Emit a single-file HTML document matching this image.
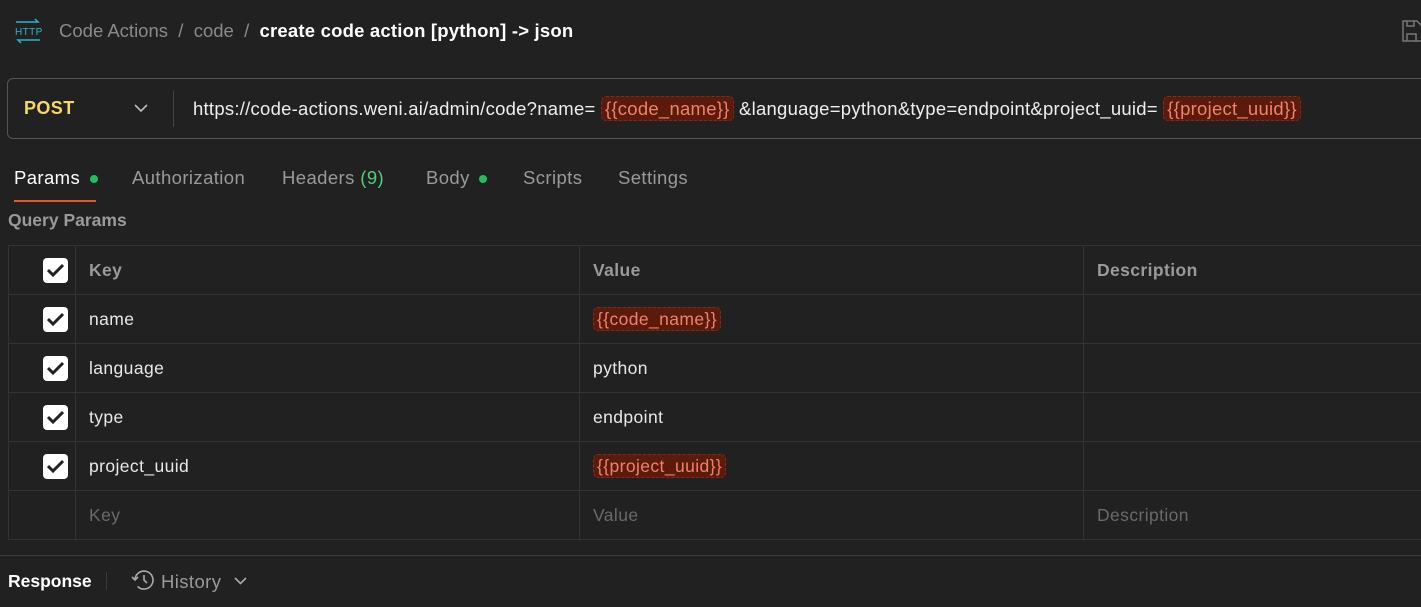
<!DOCTYPE html>
<html><head><meta charset="utf-8"><style>
*{margin:0;padding:0;box-sizing:border-box}
body{width:1421px;height:607px;background:#212121;font-family:"Liberation Sans",sans-serif;color:#e6e6e6;position:relative;overflow:hidden;letter-spacing:0.4px}
.a{position:absolute;white-space:nowrap}
.var{background:#5a1a0c;color:#f0826a;border-radius:5px;padding:1px 3px;border:1px dashed #7a2e1e}
table{position:absolute;left:8px;top:245px;border-collapse:collapse;width:1430px}
td{border:1px solid #333;height:49px;font-size:17.5px;padding-left:13px;color:#e8e8e8}
td.c{width:67px;padding:0 0 0 34px;text-align:left}
.cb{display:inline-block;width:25px;height:25px;background:#fff;border-radius:4px;vertical-align:middle;position:relative}
.cb svg{position:absolute;left:4px;top:5px}
.h td{color:#9a9a9a;font-weight:bold}
.ph td{color:#6a6a6a}
</style></head><body>
<svg class="a" style="left:14px;top:18px" width="28" height="26" viewBox="0 0 28 26" fill="none" stroke="#2bb6c8" stroke-width="1.5"><path d="M2 4h22l-3-3"/><path d="M26 22H4l3 3"/><text x="1" y="17" font-size="10" fill="#2bb6c8" stroke="none" font-family="Liberation Sans">HTTP</text></svg>
<div class="a" style="left:59px;top:20px;font-size:18.5px;color:#8a8a8a;letter-spacing:0">Code Actions &nbsp;/&nbsp; code &nbsp;/&nbsp; <b style="color:#fff;letter-spacing:0.2px">create code action [python] -&gt; json</b></div>
<svg class="a" style="left:1402px;top:20px" width="20" height="22" viewBox="0 0 20 22" fill="none" stroke="#777" stroke-width="1.5"><path d="M1 1h14l5 5v15H1z"/><path d="M5 1v5h7V1"/><path d="M5 21v-7h9v7"/></svg>
<div class="a" style="left:7px;top:78px;width:1440px;height:61px;border:1px solid #555;border-radius:6px"></div>
<div class="a" style="left:24px;top:98px;font-size:18px;font-weight:bold;color:#f5d76a">POST</div>
<svg class="a" style="left:134px;top:104px" width="14" height="9" fill="none" stroke="#bbb" stroke-width="1.6"><path d="M1 1l6 6 6-6"/></svg>
<div class="a" style="left:173px;top:91px;width:1px;height:36px;background:#444"></div>
<div class="a" style="left:193px;top:98px;font-size:18.5px;color:#eee;letter-spacing:0.25px">https://code-actions.weni.ai/admin/code?name= <span class="var">{{code_name}}</span> &amp;language=python&amp;type=endpoint&amp;project_uuid= <span class="var">{{project_uuid}}</span></div>
<div class="a" style="left:14px;top:167px;font-size:18.5px;color:#fff">Params <span style="display:inline-block;width:8px;height:8px;border-radius:50%;background:#1ec05a;vertical-align:middle;margin-left:4px"></span></div>
<div class="a" style="left:14px;top:200px;width:82px;height:2px;background:#e8562a"></div>
<div class="a" style="left:132px;top:167px;font-size:18.5px;color:#9a9a9a">Authorization</div>
<div class="a" style="left:282px;top:167px;font-size:18.5px;color:#9a9a9a">Headers <span style="color:#4fcf7a">(9)</span></div>
<div class="a" style="left:426px;top:167px;font-size:18.5px;color:#9a9a9a">Body <span style="display:inline-block;width:8px;height:8px;border-radius:50%;background:#1ec05a;vertical-align:middle;margin-left:4px"></span></div>
<div class="a" style="left:523px;top:167px;font-size:18.5px;color:#9a9a9a">Scripts</div>
<div class="a" style="left:618px;top:167px;font-size:18.5px;color:#9a9a9a">Settings</div>
<div class="a" style="left:8px;top:210px;font-size:17.5px;font-weight:bold;color:#9a9a9a;letter-spacing:0">Query Params</div>
<table>
<tr class="h"><td class="c"><span class="cb"><svg width="17" height="14" fill="none" stroke="#222" stroke-width="3"><path d="M1 7l5 5L16 2"/></svg></span></td><td style="width:504px">Key</td><td style="width:504px">Value</td><td>Description</td></tr>
<tr><td class="c"><span class="cb"><svg width="17" height="14" fill="none" stroke="#222" stroke-width="3"><path d="M1 7l5 5L16 2"/></svg></span></td><td>name</td><td><span class="var">{{code_name}}</span></td><td></td></tr>
<tr><td class="c"><span class="cb"><svg width="17" height="14" fill="none" stroke="#222" stroke-width="3"><path d="M1 7l5 5L16 2"/></svg></span></td><td>language</td><td>python</td><td></td></tr>
<tr><td class="c"><span class="cb"><svg width="17" height="14" fill="none" stroke="#222" stroke-width="3"><path d="M1 7l5 5L16 2"/></svg></span></td><td>type</td><td>endpoint</td><td></td></tr>
<tr><td class="c"><span class="cb"><svg width="17" height="14" fill="none" stroke="#222" stroke-width="3"><path d="M1 7l5 5L16 2"/></svg></span></td><td>project_uuid</td><td><span class="var">{{project_uuid}}</span></td><td></td></tr>
<tr class="ph"><td class="c"></td><td>Key</td><td>Value</td><td>Description</td></tr>
</table>
<div class="a" style="left:0;top:555px;width:1421px;height:1px;background:#3a3a3a"></div>
<div class="a" style="left:8px;top:571px;font-size:17.5px;font-weight:bold;color:#fff;letter-spacing:0">Response</div>
<div class="a" style="left:106px;top:572px;width:1px;height:18px;background:#3a3a3a"></div>
<svg class="a" style="left:131px;top:569px" width="24" height="22" viewBox="0 0 24 22" fill="none" stroke="#aaa" stroke-width="1.6"><path d="M4 11a9 9 0 1 1 2.6 6.4"/><path d="M1 8l3 3 3-3"/><path d="M13 6v5l3 3"/></svg>
<div class="a" style="left:161px;top:571px;font-size:18.5px;color:#9a9a9a">History</div>
<svg class="a" style="left:234px;top:577px" width="13" height="8" fill="none" stroke="#aaa" stroke-width="1.6"><path d="M1 1l5.5 5.5L12 1"/></svg>
</body></html>
